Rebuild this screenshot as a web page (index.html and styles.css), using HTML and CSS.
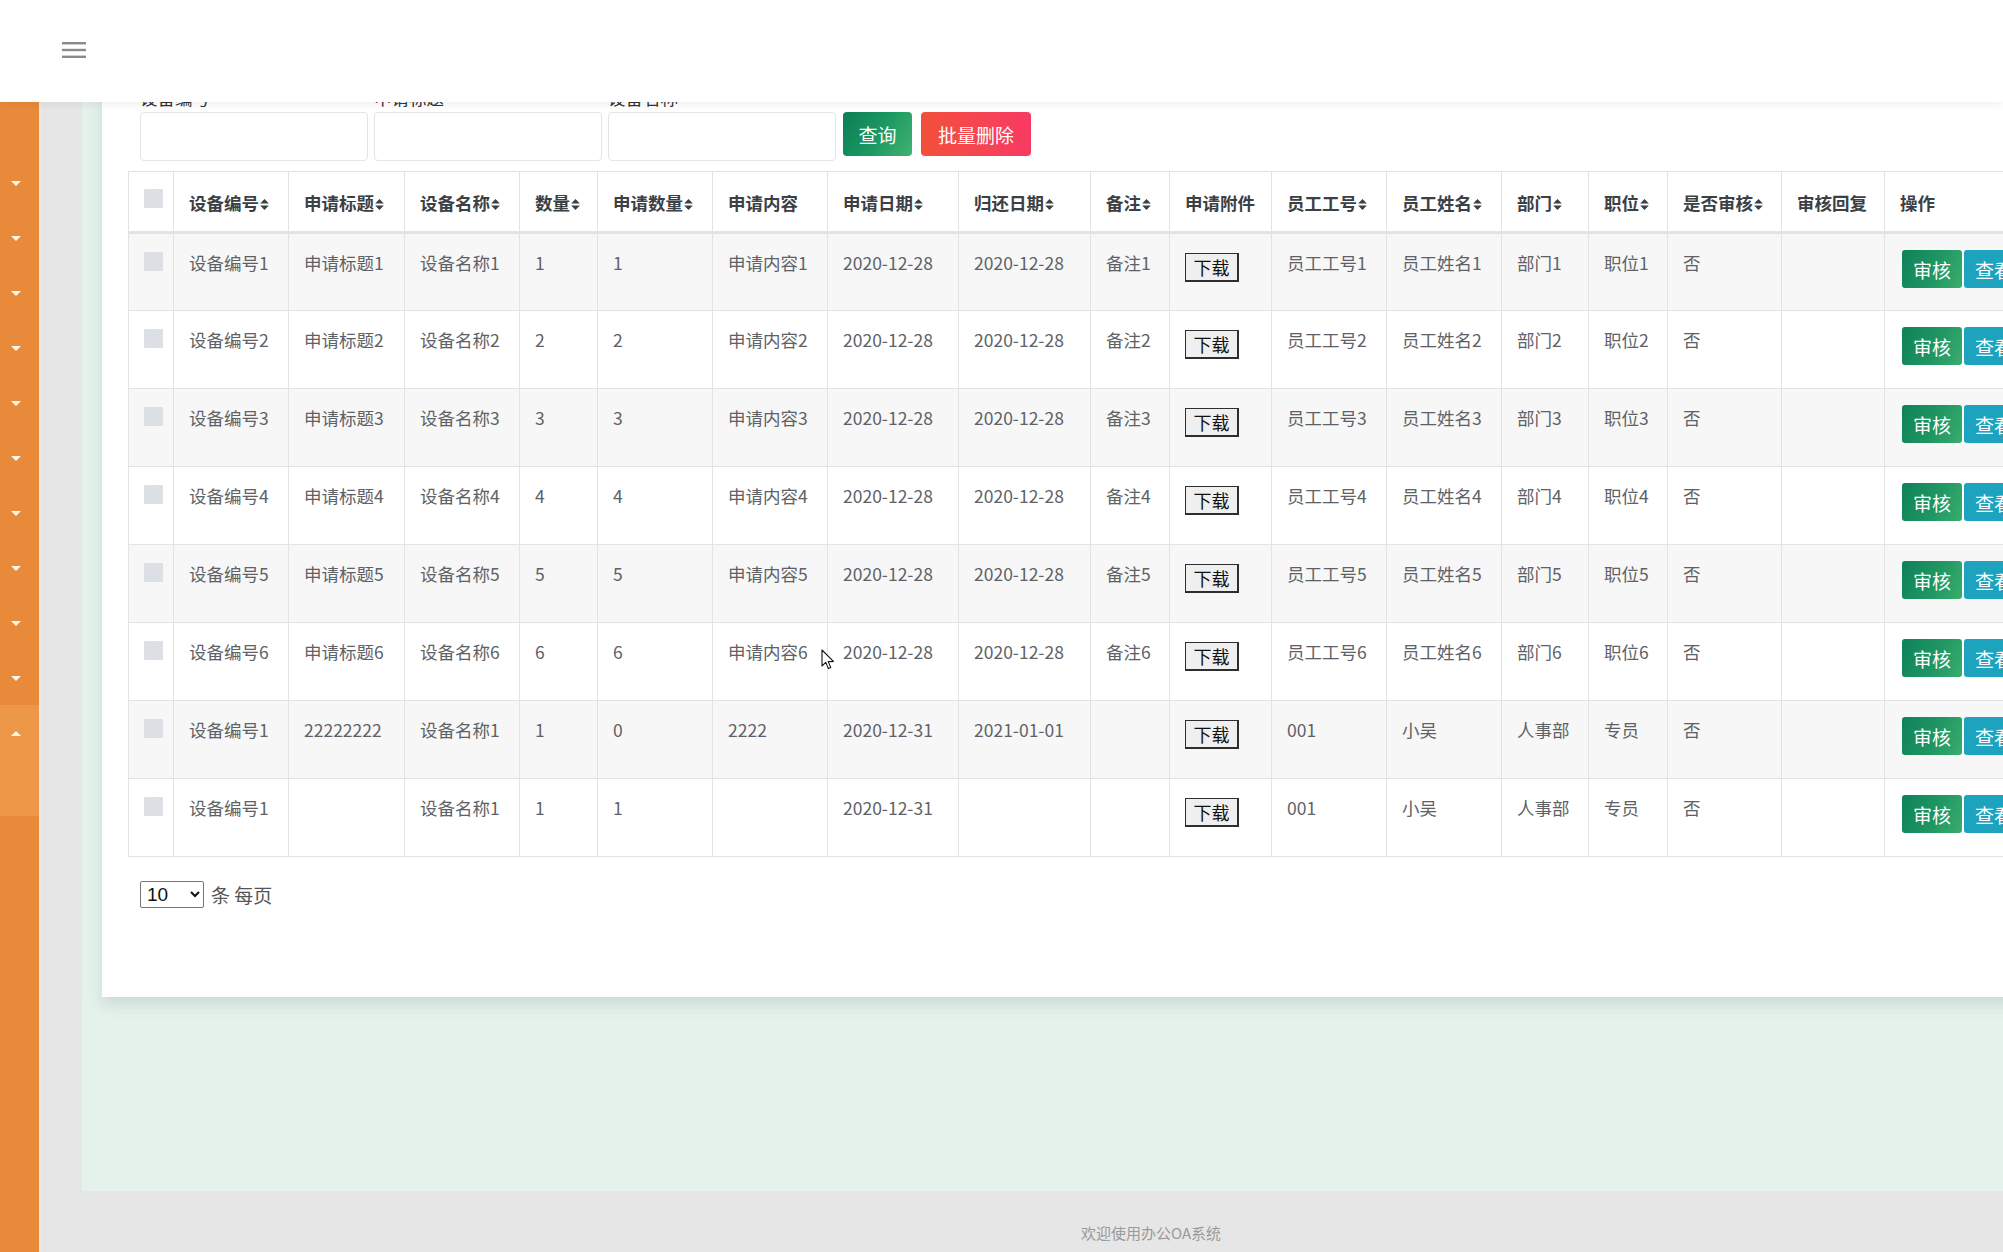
FILE: index.html
```html
<!DOCTYPE html>
<html lang="zh-CN">
<head>
<meta charset="utf-8">
<title>设备申请</title>
<link rel="stylesheet" href="styles.css">
</head>
<body>
<header class="topbar">
  <button class="menu-btn" type="button" aria-label="菜单">
    <svg width="24" height="18" viewBox="0 0 24 18"><rect x="0" y="1" width="24" height="2.4" fill="#8a8a8a"/><rect x="0" y="7.8" width="24" height="2.4" fill="#8a8a8a"/><rect x="0" y="14.6" width="24" height="2.4" fill="#8a8a8a"/></svg>
  </button>
</header>

<div class="layout">
  <aside class="sidebar">
    <ul class="nav">
      <li class="nav-item"><span class="caret"></span></li>
      <li class="nav-item"><span class="caret"></span></li>
      <li class="nav-item"><span class="caret"></span></li>
      <li class="nav-item"><span class="caret"></span></li>
      <li class="nav-item"><span class="caret"></span></li>
      <li class="nav-item"><span class="caret"></span></li>
      <li class="nav-item"><span class="caret"></span></li>
      <li class="nav-item"><span class="caret"></span></li>
      <li class="nav-item"><span class="caret"></span></li>
      <li class="nav-item"><span class="caret"></span></li>
      <li class="nav-item open"><span class="caret up"></span><div class="sub"></div></li>
    </ul>
  </aside>

  <div class="main">
    <div class="content">
      <section class="panel">
        <form class="search">
          <div class="field"><label>设备编号</label><input type="text"></div>
          <div class="field"><label>申请标题</label><input type="text"></div>
          <div class="field"><label>设备名称</label><input type="text"></div>
          <button type="button" class="btn btn-query">查询</button>
          <button type="button" class="btn btn-batch">批量删除</button>
        </form>

        <table class="grid">
          <colgroup>
            <col class="c-check"><col class="c115"><col class="c116"><col class="c115"><col class="c78"><col class="c115"><col class="c115"><col class="c131"><col class="c132"><col class="c79"><col class="c102"><col class="c115"><col class="c115"><col class="c87"><col class="c79"><col class="c114"><col class="c103"><col class="c-ops">
          </colgroup>
          <thead>
            <tr>
              <th class="check"><span class="cbox"></span></th>
              <th>设备编号<svg class="sort" viewBox="0 0 8 12"><polygon points="0,5 4,1 8,5"/><polygon points="0,7 8,7 4,11"/></svg></th>
              <th>申请标题<svg class="sort" viewBox="0 0 8 12"><polygon points="0,5 4,1 8,5"/><polygon points="0,7 8,7 4,11"/></svg></th>
              <th>设备名称<svg class="sort" viewBox="0 0 8 12"><polygon points="0,5 4,1 8,5"/><polygon points="0,7 8,7 4,11"/></svg></th>
              <th>数量<svg class="sort" viewBox="0 0 8 12"><polygon points="0,5 4,1 8,5"/><polygon points="0,7 8,7 4,11"/></svg></th>
              <th>申请数量<svg class="sort" viewBox="0 0 8 12"><polygon points="0,5 4,1 8,5"/><polygon points="0,7 8,7 4,11"/></svg></th>
              <th>申请内容</th>
              <th>申请日期<svg class="sort" viewBox="0 0 8 12"><polygon points="0,5 4,1 8,5"/><polygon points="0,7 8,7 4,11"/></svg></th>
              <th>归还日期<svg class="sort" viewBox="0 0 8 12"><polygon points="0,5 4,1 8,5"/><polygon points="0,7 8,7 4,11"/></svg></th>
              <th>备注<svg class="sort" viewBox="0 0 8 12"><polygon points="0,5 4,1 8,5"/><polygon points="0,7 8,7 4,11"/></svg></th>
              <th>申请附件</th>
              <th>员工工号<svg class="sort" viewBox="0 0 8 12"><polygon points="0,5 4,1 8,5"/><polygon points="0,7 8,7 4,11"/></svg></th>
              <th>员工姓名<svg class="sort" viewBox="0 0 8 12"><polygon points="0,5 4,1 8,5"/><polygon points="0,7 8,7 4,11"/></svg></th>
              <th>部门<svg class="sort" viewBox="0 0 8 12"><polygon points="0,5 4,1 8,5"/><polygon points="0,7 8,7 4,11"/></svg></th>
              <th>职位<svg class="sort" viewBox="0 0 8 12"><polygon points="0,5 4,1 8,5"/><polygon points="0,7 8,7 4,11"/></svg></th>
              <th>是否审核<svg class="sort" viewBox="0 0 8 12"><polygon points="0,5 4,1 8,5"/><polygon points="0,7 8,7 4,11"/></svg></th>
              <th>审核回复</th>
              <th>操作</th>
            </tr>
          </thead>
          <tbody>
            <tr>
              <td class="check"><span class="cbox"></span></td>
              <td>设备编号1</td><td>申请标题1</td><td>设备名称1</td><td>1</td><td>1</td><td>申请内容1</td><td>2020-12-28</td><td>2020-12-28</td><td>备注1</td>
              <td><button type="button" class="dl">下载</button></td>
              <td>员工工号1</td><td>员工姓名1</td><td>部门1</td><td>职位1</td><td>否</td><td></td>
              <td class="ops"><div class="ops-row"><button type="button" class="op op-audit">审核</button><button type="button" class="op op-view">查看</button><button type="button" class="op op-edit">修改</button><button type="button" class="op op-del">删除</button></div></td>
            </tr>
            <tr>
              <td class="check"><span class="cbox"></span></td>
              <td>设备编号2</td><td>申请标题2</td><td>设备名称2</td><td>2</td><td>2</td><td>申请内容2</td><td>2020-12-28</td><td>2020-12-28</td><td>备注2</td>
              <td><button type="button" class="dl">下载</button></td>
              <td>员工工号2</td><td>员工姓名2</td><td>部门2</td><td>职位2</td><td>否</td><td></td>
              <td class="ops"><div class="ops-row"><button type="button" class="op op-audit">审核</button><button type="button" class="op op-view">查看</button><button type="button" class="op op-edit">修改</button><button type="button" class="op op-del">删除</button></div></td>
            </tr>
            <tr>
              <td class="check"><span class="cbox"></span></td>
              <td>设备编号3</td><td>申请标题3</td><td>设备名称3</td><td>3</td><td>3</td><td>申请内容3</td><td>2020-12-28</td><td>2020-12-28</td><td>备注3</td>
              <td><button type="button" class="dl">下载</button></td>
              <td>员工工号3</td><td>员工姓名3</td><td>部门3</td><td>职位3</td><td>否</td><td></td>
              <td class="ops"><div class="ops-row"><button type="button" class="op op-audit">审核</button><button type="button" class="op op-view">查看</button><button type="button" class="op op-edit">修改</button><button type="button" class="op op-del">删除</button></div></td>
            </tr>
            <tr>
              <td class="check"><span class="cbox"></span></td>
              <td>设备编号4</td><td>申请标题4</td><td>设备名称4</td><td>4</td><td>4</td><td>申请内容4</td><td>2020-12-28</td><td>2020-12-28</td><td>备注4</td>
              <td><button type="button" class="dl">下载</button></td>
              <td>员工工号4</td><td>员工姓名4</td><td>部门4</td><td>职位4</td><td>否</td><td></td>
              <td class="ops"><div class="ops-row"><button type="button" class="op op-audit">审核</button><button type="button" class="op op-view">查看</button><button type="button" class="op op-edit">修改</button><button type="button" class="op op-del">删除</button></div></td>
            </tr>
            <tr>
              <td class="check"><span class="cbox"></span></td>
              <td>设备编号5</td><td>申请标题5</td><td>设备名称5</td><td>5</td><td>5</td><td>申请内容5</td><td>2020-12-28</td><td>2020-12-28</td><td>备注5</td>
              <td><button type="button" class="dl">下载</button></td>
              <td>员工工号5</td><td>员工姓名5</td><td>部门5</td><td>职位5</td><td>否</td><td></td>
              <td class="ops"><div class="ops-row"><button type="button" class="op op-audit">审核</button><button type="button" class="op op-view">查看</button><button type="button" class="op op-edit">修改</button><button type="button" class="op op-del">删除</button></div></td>
            </tr>
            <tr>
              <td class="check"><span class="cbox"></span></td>
              <td>设备编号6</td><td>申请标题6</td><td>设备名称6</td><td>6</td><td>6</td><td>申请内容6</td><td>2020-12-28</td><td>2020-12-28</td><td>备注6</td>
              <td><button type="button" class="dl">下载</button></td>
              <td>员工工号6</td><td>员工姓名6</td><td>部门6</td><td>职位6</td><td>否</td><td></td>
              <td class="ops"><div class="ops-row"><button type="button" class="op op-audit">审核</button><button type="button" class="op op-view">查看</button><button type="button" class="op op-edit">修改</button><button type="button" class="op op-del">删除</button></div></td>
            </tr>
            <tr>
              <td class="check"><span class="cbox"></span></td>
              <td>设备编号1</td><td>22222222</td><td>设备名称1</td><td>1</td><td>0</td><td>2222</td><td>2020-12-31</td><td>2021-01-01</td><td></td>
              <td><button type="button" class="dl">下载</button></td>
              <td>001</td><td>小吴</td><td>人事部</td><td>专员</td><td>否</td><td></td>
              <td class="ops"><div class="ops-row"><button type="button" class="op op-audit">审核</button><button type="button" class="op op-view">查看</button><button type="button" class="op op-edit">修改</button><button type="button" class="op op-del">删除</button></div></td>
            </tr>
            <tr>
              <td class="check"><span class="cbox"></span></td>
              <td>设备编号1</td><td></td><td>设备名称1</td><td>1</td><td>1</td><td></td><td>2020-12-31</td><td></td><td></td>
              <td><button type="button" class="dl">下载</button></td>
              <td>001</td><td>小吴</td><td>人事部</td><td>专员</td><td>否</td><td></td>
              <td class="ops"><div class="ops-row"><button type="button" class="op op-audit">审核</button><button type="button" class="op op-view">查看</button><button type="button" class="op op-edit">修改</button><button type="button" class="op op-del">删除</button></div></td>
            </tr>
          </tbody>
        </table>

        <div class="pager">
          <select class="page-size"><option>10</option><option>20</option><option>50</option></select>
          <span class="pager-text">条 每页</span>
        </div>
      </section>
    </div>
    <footer class="footer">欢迎使用办公OA系统</footer>
  </div>
</div>

<svg class="cursor" width="14" height="22" viewBox="0 0 14 22"><path d="M1 1 L1 17 L4.8 13.4 L7.4 19.6 L9.8 18.6 L7.2 12.6 L12.4 12.4 Z" fill="#fff" stroke="#111" stroke-width="1.1" stroke-linejoin="round"/></svg>
</body>
</html>
```

FILE: styles.css
```css
html, body {
  margin: 0;
  padding: 0;
  overflow: hidden;
}

body {
  font-family: "Noto Sans CJK SC", "Noto Sans", "Liberation Sans", sans-serif;
  font-size: 17.5px;
  color: #555;
  background: #e6e6e6;
}

.topbar {
  position: fixed;
  top: 0;
  left: 0;
  right: 0;
  height: 102px;
  background: #fff;
  box-shadow: 0 2px 8px rgba(0, 0, 0, 0.07);
  z-index: 10;
  display: flex;
  align-items: center;
}

.menu-btn {
  margin-left: 62px;
  margin-top: -2px;
  padding: 0;
  border: 0;
  background: transparent;
  display: flex;
}

/* layout */
.layout {
  display: flex;
  width: 2220px;
  min-height: 1252px;
}

.sidebar {
  width: 39px;
  flex: none;
  background: #e98a3b;
  border-right: 2px solid #f1e9e1;
}

.nav {
  list-style: none;
  margin: 0;
  padding: 155px 0 0;
}

.nav-item {
  height: 55px;
  display: flex;
  flex-direction: column;
  align-items: flex-start;
}

.nav-item.open {
  height: 111px;
  background: #ed9749;
}

.caret {
  display: block;
  width: 0;
  height: 0;
  margin: 26px 0 0 11px;
  border-left: 5px solid transparent;
  border-right: 5px solid transparent;
  border-top: 5px solid #fff6ea;
}

.caret.up {
  border-top: 0;
  border-bottom: 5px solid #fff6ea;
}

.main {
  flex: 1;
  min-width: 0;
  display: flex;
  flex-direction: column;
  padding-left: 41px;
  background: #e6e6e6;
}

.content {
  background: #e5f2eb;
  padding: 20px 20px 194px 20px;
}

.panel {
  background: #fff;
  padding: 65px 26px 89px 26px;
  box-shadow: 0 8px 14px rgba(110, 135, 160, 0.22);
}

/* search form */
.search {
  display: flex;
  align-items: flex-start;
  margin-left: 12px;
}

.field {
  display: flex;
  flex-direction: column;
  margin-right: 6px;
}

.field label {
  line-height: 26px;
  height: 26px;
  margin-bottom: 1px;
  color: #333;
  font-size: 17.5px;
}

.field input {
  box-sizing: border-box;
  width: 228px;
  height: 49px;
  border: 1px solid #e2e5e9;
  border-radius: 4px;
  background: #fff;
  outline: none;
}

.btn {
  margin-top: 27px;
  height: 44px;
  border: 0;
  border-radius: 4px;
  color: #fff;
  font-family: inherit;
  font-size: 19px;
  padding: 0;
}

.btn-query {
  width: 69px;
  margin-left: 1px;
  background: linear-gradient(120deg, #0a7f56 0%, #1d9a63 55%, #42b270 100%);
}

.btn-batch {
  width: 110px;
  margin-left: 9px;
  background: linear-gradient(90deg, #f2503a 0%, #f64453 55%, #f73a63 100%);
}

/* table */
.grid {
  margin-top: 10px;
  border-collapse: collapse;
  table-layout: fixed;
  width: 2046px;
}

.c-check { width: 45px; }
.c78 { width: 78px; }
.c79 { width: 79px; }
.c87 { width: 87px; }
.c102 { width: 102px; }
.c103 { width: 103px; }
.c114 { width: 114px; }
.c115 { width: 115px; }
.c116 { width: 116px; }
.c131 { width: 131px; }
.c132 { width: 132px; }
.c-ops { width: 291px; }

.grid th,
.grid td {
  border: 1px solid #e0e3e7;
  padding: 0 0 0 15px;
  text-align: left;
  white-space: nowrap;
  overflow: hidden;
  line-height: 26px;
}

.grid thead tr {
  height: 61px;
}

.grid th {
  vertical-align: bottom;
  padding-bottom: 15px;
  font-weight: 700;
  color: #3b4045;
  border-bottom: 3px solid #e0e3e7;
}

.grid th.check {
  vertical-align: top;
  padding-top: 17px;
  padding-bottom: 0;
}

.sort {
  width: 9px;
  height: 13px;
  margin-left: 1px;
  vertical-align: -1px;
  fill: #3b4045;
}

.grid tbody tr {
  height: 78px;
}

.grid tbody tr:nth-child(odd) {
  background: #f7f7f7;
}

.grid td {
  vertical-align: top;
  padding-top: 16px;
  color: #5e6266;
}

.cbox {
  display: block;
  width: 19px;
  height: 19px;
  background: #dcdfe3;
  border-radius: 1px;
}

.grid td.check .cbox {
  margin-top: 2px;
}

.dl {
  display: block;
  margin-top: 3px;
  box-sizing: border-box;
  width: 54px;
  height: 29px;
  padding: 0;
  background: #efefef;
  border: 1px solid #2e2e2e;
  border-right-width: 2px;
  border-bottom-width: 2px;
  border-radius: 0;
  color: #111;
  font-family: inherit;
  font-size: 18px;
  line-height: 25px;
}

.grid td.ops {
  padding-left: 17px;
  padding-top: 16px;
}

.ops-row {
  display: flex;
  gap: 2px;
}

.op {
  height: 38px;
  width: 60px;
  flex: none;
  padding: 0;
  border: 0;
  border-radius: 3px;
  color: #fff;
  font-family: inherit;
  font-size: 19px;
}

.op-audit {
  background: linear-gradient(110deg, #0f8258 0%, #1f9663 55%, #3aac6c 100%);
}

.op-view {
  background: #1ea3bf;
}

.op-edit {
  background: #2f80d8;
}

.op-del {
  background: #f0474a;
}

/* pager */
.pager {
  margin-top: 24px;
  margin-left: 12px;
  display: flex;
  align-items: center;
  height: 27px;
}

.page-size {
  box-sizing: border-box;
  width: 64px;
  height: 27px;
  font-family: "Liberation Sans", sans-serif;
  font-size: 19px;
  color: #111;
  border: 1px solid #767676;
  border-radius: 2px;
  background: #fff;
  padding: 0 0 0 2px;
}

.pager-text {
  margin-left: 7px;
  font-size: 19px;
  color: #555;
}

/* footer */
.footer {
  height: 62px;
  box-sizing: border-box;
  padding-top: 32px;
  text-align: center;
  font-size: 15px;
  color: #9a9a9a;
  line-height: 20px;
}

/* mouse pointer captured in the screenshot */
.cursor {
  position: absolute;
  left: 821px;
  top: 649px;
  z-index: 20;
}
```
